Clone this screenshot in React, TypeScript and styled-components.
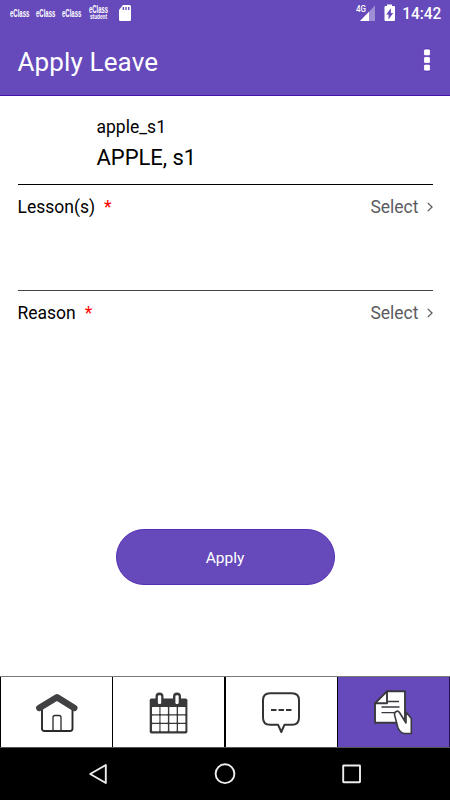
import React from "react";
import styled, { createGlobalStyle } from "styled-components";

const PURPLE = "#664abb";

const GlobalStyle = createGlobalStyle`
  *, *::before, *::after { box-sizing: border-box; }
  body { margin: 0; background: #fff; font-family: Roboto, "Liberation Sans", sans-serif; }
  svg { display: block; }
`;

const Screen = styled.div`
  width: 450px;
  height: 800px;
  display: flex;
  flex-direction: column;
  overflow: hidden;
  background: #fff;
  color: #000;
`;

const StatusBar = styled.header`
  height: 28px;
  flex: none;
  display: flex;
  justify-content: space-between;
  background: ${PURPLE};
`;

const AppBar = styled.div`
  height: 68px;
  flex: none;
  display: flex;
  justify-content: space-between;
  align-items: center;
  padding: 0 19px 0 17.5px;
  background: ${PURPLE};
  border-bottom: 1px solid #4512ab;
`;

const Title = styled.h1`
  margin: 1px 0 0;
  font-size: 26px;
  font-weight: 400;
  line-height: 32px;
  letter-spacing: 0.13px;
  color: #fff;
`;

const MenuButton = styled.button`
  border: 0;
  padding: 0;
  margin-top: -3px;
  background: none;
`;

const Content = styled.main`
  flex: 1;
  display: flex;
  flex-direction: column;
  padding: 0 17.5px;
`;

const Student = styled.section`
  height: 88px;
  padding: 20px 0 0 79px;
`;

const Login = styled.div`
  font-size: 17.5px;
  line-height: 22px;
`;

const Name = styled.div`
  margin-top: 7px;
  font-size: 22px;
  line-height: 26px;
  letter-spacing: -0.05px;
`;

const Field = styled.section<{ $height: number; $line: string }>`
  height: ${(p) => p.$height}px;
  display: flex;
  justify-content: space-between;
  align-items: flex-start;
  padding-top: 11px;
  border-top: 1px solid ${(p) => p.$line};
  font-size: 17.5px;
  line-height: 22px;
`;

const Required = styled.span`
  margin-left: 9px;
  color: #f00;
`;

const Picker = styled.div`
  display: flex;
  align-items: center;
  gap: 8px;
  color: #5b5b60;
`;

const ApplyButton = styled.button`
  width: 219px;
  height: 56px;
  margin: 133px auto 0;
  padding: 2px 0 0;
  border: 1px solid #5630b3;
  border-radius: 28px;
  background: ${PURPLE};
  color: #fff;
  font: 400 15.5px/20px Roboto, sans-serif;
`;

const Tabs = styled.nav`
  height: 72px;
  flex: none;
  display: grid;
  grid-template-columns: 112px 112px 113px 113px;
  border-top: 1px solid #777;
  border-bottom: 1px solid #555;
`;

const Tab = styled.div<{ $active?: boolean; $left: number }>`
  border-left: ${(p) => p.$left}px solid #000;
  background: ${(p) => (p.$active ? PURPLE : "#fff")};
  ${(p) => p.$active && "border-right: 1px solid #25134f;"}
`;

const SystemNav = styled.footer`
  height: 52px;
  flex: none;
  display: flex;
  justify-content: center;
  background: #000;
`;

const Notifications = () => (
  <svg width="140" height="28" viewBox="0 0 140 28" fill="#fff" fontFamily="Liberation Sans, sans-serif" fontWeight="700">
    {[10, 36, 62].map((x) => (
      <text key={x} x={x} y="17.2" fontSize="11.5" textLength="19.3" lengthAdjust="spacingAndGlyphs">eClass</text>
    ))}
    <text x="89" y="13.4" fontSize="10" textLength="19" lengthAdjust="spacingAndGlyphs">eClass</text>
    <text x="90" y="19.3" fontSize="6.5" textLength="17" lengthAdjust="spacingAndGlyphs">student</text>
    <path d="M123 5h6.5q1.5 0 1.5 1.5v13q0 1.5-1.5 1.5h-9q-1.5 0-1.5-1.5V10z" />
    <path d="M123.3 7v3M126 7v3M128.7 7v3" stroke={PURPLE} strokeWidth="1.4" />
  </svg>
);

const SystemStatus = () => (
  <svg width="100" height="28" viewBox="350 0 100 28" fill="#fff" fontFamily="Roboto, sans-serif">
    <path d="M375 5.5V21H360z" opacity=".38" />
    <path d="M369 11.7V21h-9z" />
    <path d="M354 4h13v10h-13z" fill={PURPLE} opacity=".65" />
    <text x="356" y="12.4" fontSize="9.5" fontWeight="500" textLength="10" lengthAdjust="spacingAndGlyphs">4G</text>
    <path d="M387 4.5h5V6h2q1 0 1 1v13q0 1-1 1h-8.500q-1 0-1-1V7q0-1 1-1h1.500z" />
    <path d="M390.900 8.200v4.800h2.300l-4.700 6.500v-5h-2.300z" fill={PURPLE} />
    <text x="402.300" y="19.300" fontSize="17" fontWeight="500" textLength="39" lengthAdjust="spacingAndGlyphs">14:42</text>
  </svg>
);

const MoreIcon = () => (
  <svg width="8" height="24" viewBox="0 0 8 24" fill="#fff" stroke="#4c20b4" strokeWidth=".7">
    {[1, 8.600, 16.200].map((y) => <rect key={y} x=".6" y={y} width="6.800" height="6.800" rx="1.500" />)}
  </svg>
);

const Chevron = () => (
  <svg width="6" height="10" viewBox="0 0 6 10" fill="none" stroke="#5b5b60" strokeWidth="1.3">
    <path d="M.8.900 5 5 .8 9.100" />
  </svg>
);

const HomeIcon = () => (
  <svg width="111" height="70" viewBox="1 677 111 70" fill="none" stroke="#29292c" strokeLinejoin="round" strokeLinecap="round">
    <path d="M42 707v21.500q0 2.500 2.500 2.500h25.500q2.500 0 2.500-2.500V707" strokeWidth="1.900" />
    <path d="M53 730.500v-13q0-2 2-2h4q2 0 2 2v13" strokeWidth="1.300" />
    <path d="M39.300 708 57 697.200 74.300 708" stroke="#414143" strokeWidth="6.400" />
  </svg>
);

const CalendarIcon = () => (
  <svg width="111" height="70" viewBox="113 677 111 70">
    <rect x="149.700" y="698.500" width="37.700" height="35" rx="1.800" fill="#39393b" />
    <path d="M155.500 703v-6.500q0-3.900 4-3.900t4 3.900v6.500zM173 703v-6.500q0-3.900 4-3.900t4 3.900v6.500z" fill="#39393b" />
    <rect x="157.900" y="695.200" width="3.300" height="8.700" rx="1.200" fill="#fff" />
    <rect x="175.400" y="695.200" width="3.300" height="8.700" rx="1.200" fill="#fff" />
    {[707, 715.500, 724].map((y) =>
      [152, 160.500, 169.300, 178].map((x) => (
        <rect key={`${x}-${y}`} x={x} y={y} width="7.400" height="7.200" rx=".6" fill="#fff" />
      )),
    )}
  </svg>
);

const ChatIcon = () => (
  <svg width="111" height="70" viewBox="226 677 111 70" fill="none" stroke="#343437" strokeWidth="2" strokeLinejoin="round">
    <path d="M270 693.200h22q7 0 7 7v17.500q0 7-7 7h-7.500l-3.200 7.300-3.300-7.300H270q-7 0-7-7v-17.500q0-7 7-7z" />
    <path d="M271 710h5.500M278.500 710h5.500M286 710h5.500" />
  </svg>
);

const LeaveIcon = () => (
  <svg width="111" height="70" viewBox="338 677 111 70" fill="#fff" stroke="#3b3940" strokeWidth="1.900" strokeLinejoin="round">
    <path d="M387 691.300h18v31.500h-30v-19.500z" />
    <path d="M387 691.300v12h-12z" />
    <path d="M388 701.500h11M381.500 707h18M381.500 712.700h13" strokeWidth="1.300" />
    <path d="M411.300 733.500v-15l-5.300-6.500v11l-6.500-10.500q-1.500-2-3.300-1-2.200 1-1.600 3.600l2.500 9.400q.5 4.500 3.300 7 1.700 1.600 4 2z" strokeWidth="1.600" />
  </svg>
);

const NavIcons = () => (
  <svg width="450" height="52" viewBox="0 748 450 52" fill="none" stroke="#ededed" strokeWidth="1.900" strokeLinejoin="round">
    <path d="M105.800 765v18l-15.600-9z" />
    <circle cx="225" cy="773.700" r="9.400" />
    <rect x="343.200" y="765.500" width="16.800" height="16.800" rx=".5" />
  </svg>
);

function SelectField({ label, height, line }: { label: string; height: number; line: string }) {
  return (
    <Field $height={height} $line={line}>
      <div>{label}<Required>*</Required></div>
      <Picker>Select<Chevron /></Picker>
    </Field>
  );
}

export default function App() {
  return (
    <>
      <GlobalStyle />
      <Screen>
        <StatusBar><Notifications /><SystemStatus /></StatusBar>
        <AppBar>
          <Title>Apply Leave</Title>
          <MenuButton aria-label="More options"><MoreIcon /></MenuButton>
        </AppBar>
        <Content>
          <Student>
            <Login>apple_s1</Login>
            <Name>APPLE, s1</Name>
          </Student>
          <SelectField label="Lesson(s)" height={106} line="#000" />
          <SelectField label="Reason" height={106} line="#444" />
          <ApplyButton>Apply</ApplyButton>
        </Content>
        <Tabs>
          <Tab $left={1}><HomeIcon /></Tab>
          <Tab $left={1}><CalendarIcon /></Tab>
          <Tab $left={2}><ChatIcon /></Tab>
          <Tab $left={1} $active><LeaveIcon /></Tab>
        </Tabs>
        <SystemNav><NavIcons /></SystemNav>
      </Screen>
    </>
  );
}
